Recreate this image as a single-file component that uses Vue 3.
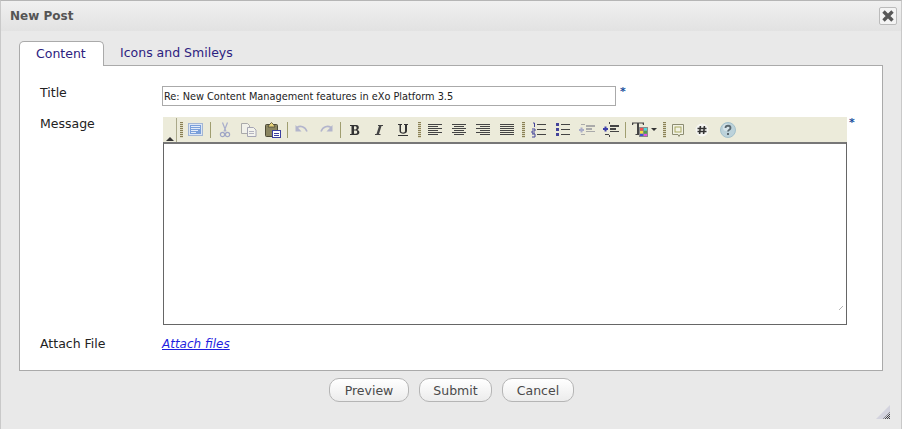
<template>
  <div class="dialog">
    <div class="title-bar">
      <span class="title-text">New Post</span>
      <button class="close" aria-label="Close">
        <svg width="14" height="14" viewBox="0 0 14 14">
          <path d="M2.5 2.5 L11.5 11.5 M11.5 2.5 L2.5 11.5" stroke="#585858" stroke-width="3.4" fill="none" />
        </svg>
      </button>
    </div>

    <div class="body">
      <div class="tabs">
        <div class="tab active">Content</div>
        <div class="tab">Icons and Smileys</div>
      </div>

      <div class="panel">
        <div class="row row-title">
          <label class="label">Title</label>
          <input class="title-input" type="text" value="Re: New Content Management features in eXo Platform 3.5" />
          <span class="req">*</span>
        </div>

        <div class="row row-message">
          <label class="label">Message</label>
          <div class="editor">
            <div class="toolbar">
              <span class="collapse"><i></i></span>
              <template v-for="(item, i) in tools" :key="i">
                <span v-if="item === '|'" class="sep"></span>
                <span v-else-if="item === ':'" class="grip"></span>
                <svg v-else class="tool" :class="item" width="16" height="16" viewBox="0 0 16 16" v-html="icons[item]"></svg>
              </template>
            </div>
            <div class="edit-area">
              <svg class="resize-grip" width="4" height="4" viewBox="0 0 4 4">
                <path d="M0 4 L4 0" stroke="#b5b5b5" stroke-width="1" />
              </svg>
            </div>
          </div>
          <span class="req req-msg">*</span>
        </div>

        <div class="row row-attach">
          <label class="label">Attach File</label>
          <a class="attach" href="#">Attach files</a>
        </div>
      </div>

      <div class="actions">
        <button class="btn btn-preview">Preview</button>
        <button class="btn btn-submit">Submit</button>
        <button class="btn btn-cancel">Cancel</button>
      </div>
    </div>

    <svg class="dialog-grip" width="14" height="14" viewBox="0 0 14 14">
      <defs>
        <pattern id="dither" width="2" height="2" patternUnits="userSpaceOnUse">
          <rect width="2" height="2" fill="#d3d3de" />
          <rect width="1" height="1" fill="#444" />
          <rect x="1" y="1" width="1" height="1" fill="#444" />
        </pattern>
      </defs>
      <path d="M0 14 L14 0 L14 14 Z" fill="#d3d3de" />
      <path d="M7 14 L14 7 L14 14 Z" fill="url(#dither)" />
    </svg>
  </div>
</template>

<script setup>
const lines = (rows, color) =>
  rows
    .map(([x, y, w]) => `<rect x="${x}" y="${y}" width="${w}" height="1" fill="${color}"/>`)
    .join("")

const icons = {
  source:
    '<rect x="0.5" y="1.5" width="14" height="12" fill="#dde6f4" stroke="#a3b6d4"/><rect x="2" y="3" width="11" height="9" fill="#7ba0da"/><rect x="3" y="4" width="9" height="1" fill="#e4ecf8"/><rect x="3" y="6" width="9" height="1" fill="#e4ecf8"/><rect x="3" y="8" width="7" height="1" fill="#e4ecf8"/><rect x="3" y="10" width="5" height="1" fill="#e4ecf8"/>',
  cut:
    '<path d="M5.5 0.5 L9 9.5 M10.5 0.5 L7 9.5" stroke="#a9aecb" stroke-width="1.2" fill="none"/><circle cx="5.5" cy="12.5" r="2.1" fill="none" stroke="#a0a6c6" stroke-width="1.2"/><circle cx="10.5" cy="12.5" r="2.1" fill="none" stroke="#a0a6c6" stroke-width="1.2"/>',
  copy:
    '<path d="M0.5 1.5 H6.5 L8.5 3.5 V11.5 H0.5 Z" fill="#f1f1ea" stroke="#a9a9a9"/><path d="M6.5 5.5 H12.5 L15 8 V14.5 H6.5 Z" fill="#f4f4ee" stroke="#a6a6b4"/><rect x="8" y="9" width="5" height="1" fill="#b5b5c0"/><rect x="8" y="11" width="5" height="1" fill="#b5b5c0"/>',
  paste:
    '<rect x="0.5" y="2.5" width="12" height="12" rx="1" fill="#8a8560" stroke="#4d4a36"/><path d="M4 3 L6.5 0.5 L9 3 L10 5 H3 Z" fill="#e6d27a" stroke="#4d4a36" stroke-width="0.8"/><rect x="7.5" y="8.5" width="8" height="7" fill="#fff" stroke="#3b3fa0"/><rect x="9" y="11" width="5" height="1" fill="#3b3fa0"/><rect x="9" y="13" width="5" height="1" fill="#3b3fa0"/>',
  undo:
    '<path d="M3 5.5 C6 3.5 11 4 13 9.5" stroke="#b3b5cc" stroke-width="1.6" fill="none"/><path d="M1.5 3 V9.5 H7.5 Z" fill="#b3b5cc"/>',
  redo:
    '<path d="M13 5.5 C10 3.5 5 4 3 9.5" stroke="#b3b5cc" stroke-width="1.6" fill="none"/><path d="M14.5 3 V9.5 H8.5 Z" fill="#b3b5cc"/>',
  bold:
    '<path d="M3 3 H9.5 C12.5 3 12.5 7.5 10 8 C13.5 8.5 13 13 9.5 13 H3 V12 H4.5 V4 H3 Z M7 4.2 V7.4 H8.5 C10 7.4 10 4.2 8.5 4.2 Z M7 8.6 V11.8 H9 C10.6 11.8 10.6 8.6 9 8.6 Z" fill="#333" fill-rule="evenodd"/>',
  italic: '<path d="M7 3 H12 V4 H10.5 L8 12 H9.5 V13 H4 V12 H5.5 L8 4 H7 Z" fill="#444"/>',
  underline:
    '<path d="M3 2 H7 V3 H6 V9 C6 11 10 11 10 9 V3 H9 V2 H13 V3 H12 V9 C12 12.5 4.5 12.5 4.5 9 V3 H3 Z" fill="#333"/><rect x="3" y="13" width="10" height="1" fill="#333"/>',
  left: lines([[1, 2, 14], [1, 4, 10], [1, 6, 14], [1, 8, 10], [1, 10, 14], [1, 12, 10]], "#444"),
  center: lines([[1, 2, 14], [3, 4, 10], [1, 6, 14], [3, 8, 10], [1, 10, 14], [3, 12, 10]], "#444"),
  right: lines([[1, 2, 14], [5, 4, 10], [1, 6, 14], [5, 8, 10], [1, 10, 14], [5, 12, 10]], "#444"),
  justify: lines([[1, 2, 14], [1, 4, 14], [1, 6, 14], [1, 8, 14], [1, 10, 14], [1, 12, 14]], "#444"),
  ol:
    '<path d="M2 1 H3.5 V5 M1 7 H4 V9 H1 V11 H4 M1 12 H4 V15 H1" stroke="#44449a" stroke-width="1" fill="none"/>' +
    lines([[6, 2, 9], [6, 7, 9], [6, 12, 9]], "#444"),
  ul:
    '<rect x="1" y="1" width="3" height="3" fill="#44449a"/><rect x="1" y="6" width="3" height="3" fill="#44449a"/><rect x="1" y="11" width="3" height="3" fill="#44449a"/>' +
    lines([[6, 2, 9], [6, 7, 9], [6, 12, 9]], "#444"),
  outdent:
    '<path d="M0 8 H5 M2.5 5.5 V10.5" stroke="#a9acc8" stroke-width="2"/>' +
    '<rect x="7" y="3" width="9" height="2" fill="#aaa"/><rect x="7" y="6" width="6" height="2" fill="#aaa"/><rect x="7" y="9" width="9" height="1" fill="#aaa"/><rect x="2" y="2" width="4" height="1" fill="#aaa"/><rect x="2" y="12" width="4" height="1" fill="#aaa"/>',
  indent:
    '<path d="M0 7 H5 M2.5 4.5 V9.5" stroke="#3c3fa8" stroke-width="2"/>' +
    '<rect x="7" y="3" width="9" height="2" fill="#444"/><rect x="7" y="6" width="6" height="2" fill="#444"/><rect x="7" y="9" width="9" height="1" fill="#444"/><rect x="2" y="12" width="4" height="1" fill="#444"/><rect x="6" y="0" width="1" height="2" fill="#444"/><rect x="6" y="13" width="1" height="2" fill="#444"/>',
  color:
    '<path d="M0 0.5 H12 V3 H11 L10.5 1.5 H7 V12 H8.5 V13 H3.5 V12 H5 V1.5 H1.5 L1 3 H0 Z" fill="#444"/><rect x="7" y="5" width="9" height="10" fill="#8a8a8a"/><rect x="8" y="6" width="3" height="2.5" fill="#f05050"/><rect x="12" y="6" width="3" height="2.5" fill="#50d8d8"/><rect x="8" y="9" width="3" height="2.5" fill="#f0e040"/><rect x="12" y="9" width="3" height="2.5" fill="#50a050"/><rect x="8" y="12" width="3" height="2" fill="#4050d0"/><rect x="12" y="12" width="3" height="2" fill="#e050e0"/>',
  arrow: '<path d="M0 6 H6 L3 9 Z" fill="#333"/>',
  note:
    '<path d="M2.5 2.5 H13.5 V12.5 H10 L9 14.5 L8 12.5 H2.5 Z" fill="#f2f2e4" stroke="#8c8c72"/><rect x="5" y="5" width="6" height="5" fill="none" stroke="#a8a860"/>',
  hash:
    '<circle cx="8" cy="8" r="6.5" fill="#f6f6f2"/><path d="M6.4 4 L5.6 12 M10.4 4 L9.6 12 M3.5 6.5 H12.5 M3.5 9.5 H12.5" stroke="#333" stroke-width="1.6" fill="none"/>',
  help:
    '<circle cx="8" cy="8" r="7.5" fill="#bcd2da" stroke="#a3c0cb" stroke-width="1"/><circle cx="6.5" cy="5.5" r="3.5" fill="#d6e4e9"/><path d="M5.5 6 C5.5 3 10.5 3 10.5 6 C10.5 8 8 7.5 8 9.5" stroke="#5a6870" stroke-width="1.8" fill="none"/><rect x="7" y="11" width="2" height="2" fill="#5a6870"/>',
}

const tools = [
  ":", "source", "|", "cut", "copy", "paste", "|", "undo", "redo", "|", "bold", "italic", "underline",
  ":", "left", "center", "right", "justify", ":", "ol", "ul", "outdent", "indent", "|", "color", "arrow",
  ":", "note", "hash", "help",
]
</script>

<style>
html, body {
  margin: 0;
  background: #fff;
}
</style>

<style scoped>
.dialog {
  position: relative;
  box-sizing: border-box;
  width: 902px;
  height: 429px;
  background: #e9e9e9;
  border: 1px solid #c9c9c9;
  border-top-color: #b5b5b5;
  border-bottom: 0;
  font-family: "DejaVu Sans", Verdana, sans-serif;
  font-size: 12px;
  color: #222;
}
.title-bar {
  display: flex;
  align-items: center;
  justify-content: space-between;
  box-sizing: border-box;
  height: 30px;
  padding: 0 4px 0 9px;
  background: linear-gradient(#f0f0f0, #e2e2e2);
}
.title-text {
  font-weight: bold;
  font-size: 12px;
  color: #555;
}
.close {
  display: flex;
  align-items: center;
  justify-content: center;
  box-sizing: border-box;
  width: 18px;
  height: 18px;
  padding: 0;
  background: #f4f4f4;
  border: 1px solid #bbb;
  border-radius: 2px;
}
.body {
  padding: 10px 18px 0;
}
.tabs {
  display: flex;
  height: 25px;
  margin-bottom: -1px;
  position: relative;
}
.tab {
  box-sizing: border-box;
  height: 25px;
  padding: 4px 16px 0;
  color: #2c2180;
  font-size: 12.5px;
}
.tab.active {
  width: 85px;
  padding-top: 4px;
  background: #fff;
  border: 1px solid #aaa;
  border-bottom: 0;
  border-radius: 5px 5px 0 0;
}
.panel {
  box-sizing: border-box;
  width: 864px;
  height: 306px;
  padding: 20px 20px 0;
  background: #fff;
  border: 1px solid #aaa;
}
.row {
  display: flex;
  align-items: flex-start;
}
.label {
  width: 122px;
  flex: none;
  margin-top: -1px;
  color: #222;
  font-size: 12.5px;
}
.title-input {
  box-sizing: border-box;
  width: 454px;
  height: 20px;
  padding: 0 1px;
  border: 1px solid #aaa;
  background: #fff;
  font-family: "DejaVu Sans", Verdana, sans-serif;
  font-stretch: condensed;
  font-size: 10.85px;
  color: #222;
  outline: none;
}
.req {
  margin-left: 4px;
  color: #1a4f9c;
  font-weight: bold;
  font-size: 11px;
  line-height: 11px;
}
.row-message {
  margin-top: 11px;
}
.editor {
  width: 684px;
  margin-left: 1px;
  flex: none;
}
.req-msg {
  margin-left: 2px;
}
.toolbar {
  display: flex;
  align-items: center;
  box-sizing: border-box;
  height: 25px;
  background: #ecebda;
}
.collapse {
  display: flex;
  align-items: flex-end;
  justify-content: center;
  box-sizing: border-box;
  width: 14px;
  height: 24px;
  margin-top: 1px;
  padding-bottom: 1px;
  border-right: 1px solid #aaa88a;
}
.collapse i {
  width: 0;
  height: 0;
  border: 4px solid transparent;
  border-top: 0;
  border-bottom: 4px solid #333;
}
.grip {
  width: 3px;
  height: 16px;
  margin: 0 2px 0 3px;
  background: repeating-linear-gradient(#8a8055 0 1px, #dcd9c0 1px 2px);
}
.collapse + .grip {
  margin-right: 1px;
}
.sep {
  width: 1px;
  height: 16px;
  margin: 0 2px;
  background: #a09e70;
}
.tool {
  flex: none;
  margin: 0 4px;
}
.tool.arrow {
  margin: 0 -7px 0 -1px;
}
.tool.note {
  margin-left: 2px;
}
.tool.help {
  margin-left: 6px;
}
.edit-area {
  position: relative;
  box-sizing: border-box;
  height: 183px;
  background: #fff;
  border: 1px solid #666;
  border-top: 2px solid #777;
}
.resize-grip {
  position: absolute;
  right: 3px;
  bottom: 14px;
}
.row-attach {
  margin-top: 12px;
}
.attach {
  font-style: italic;
  color: #1f1fe0;
  font-size: 12px;
}
.actions {
  display: flex;
  justify-content: center;
  gap: 10px;
  margin-top: 7px;
  padding-left: 1px;
}
.btn {
  box-sizing: border-box;
  height: 24px;
  padding: 0;
  background: linear-gradient(#fff, #ececec);
  border: 1px solid #b5b5b5;
  border-radius: 10px;
  font-family: "DejaVu Sans", Verdana, sans-serif;
  font-size: 12.5px;
  color: #4a4a4a;
}
.btn-preview { width: 80px; }
.btn-submit { width: 73px; }
.btn-cancel { width: 72px; }
.dialog-grip {
  position: absolute;
  right: 11px;
  bottom: 10px;
}
</style>
